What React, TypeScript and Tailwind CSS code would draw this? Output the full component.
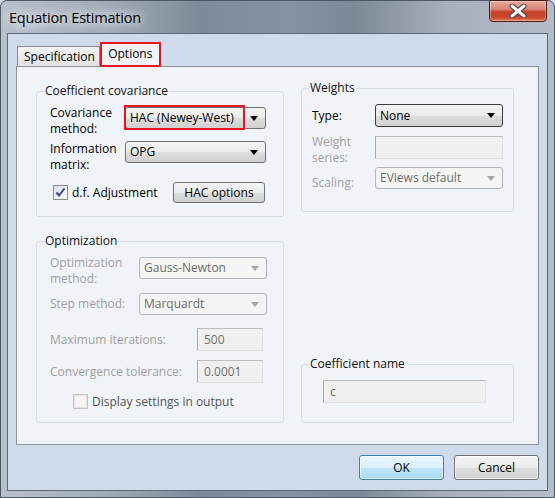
import React from "react";

function Arrow({ muted = false }: { muted?: boolean }) {
  return (
    <svg width="8" height="5" viewBox="0 0 8 5" className="shrink-0">
      <path d="M0 0H8L4 5Z" fill={muted ? "#a6a6a6" : "#000"} />
    </svg>
  );
}

function Combo({
  value,
  size,
  disabled = false,
  dark = false,
}: {
  value: string;
  size: string;
  disabled?: boolean;
  dark?: boolean;
}) {
  const look = disabled
    ? "border-[#b3b7ba] bg-[#f4f4f4] text-[#6d6d6d]"
    : dark
    ? "border-[#3c3c3c] bg-[linear-gradient(#f4f4f4_0%,#ececec_50%,#dedede_52%,#d0d0d0_100%)] text-black"
    : "border-[#707070] bg-[linear-gradient(#f4f4f4_0%,#ececec_50%,#dedede_52%,#d0d0d0_100%)] text-black";
  return (
    <div
      className={`flex items-center justify-between rounded-[3px] border pl-[4px] pr-[7px] ${look} ${size}`}
    >
      <span className="leading-[16px]">{value}</span>
      <Arrow muted={disabled} />
    </div>
  );
}

function TextBox({ value, size }: { value: string; size: string }) {
  return (
    <div
      className={`flex items-center border border-[#e2e2e2] border-l-[#a9a9a9] border-t-[#bdbdbd] bg-[#f0f0f0] pl-[6px] text-[#6d6d6d] ${size}`}
    >
      {value}
    </div>
  );
}

// group box: padding lives on the inner div so the legend stays near the corner
function Group({
  title,
  className,
  children,
}: {
  title: string;
  className: string;
  children: React.ReactNode;
}) {
  return (
    <fieldset className="rounded-[3px] border border-[#d5dde5]">
      <legend className="ml-[7px] px-[1px] leading-[16px] text-[#111]">{title}</legend>
      <div className={className}>{children}</div>
    </fieldset>
  );
}

export default function App() {
  return (
    <div className="h-[498px] w-[555px] overflow-hidden bg-[#d9dee5] font-['Open_Sans',sans-serif] text-[12px]">
      <div className="flex h-[498px] w-[555px] flex-col rounded-t-[7px] border border-[#4d5867] bg-[linear-gradient(90deg,#b7c0cb_0%,#a3adb9_18%,#7f8a98_36%,#8893a1_52%,#7d8896_64%,#a6afba_80%,#b4bcc6_100%)]">
        {/* title bar */}
        <div className="flex h-[32px] shrink-0 items-start justify-between">
          <div className="pl-[8px] pt-[7px] text-[14.5px] leading-[20px] tracking-[-0.2px] text-black [text-shadow:0_0_10px_#fff,0_0_14px_#fff]">
            Equation Estimation
          </div>
          <div className="mr-[7px] mt-[-1px] flex h-[22px] w-[58px] items-center justify-center rounded-b-[4px] border border-[#4a1c15] bg-[linear-gradient(#e9a99c_0%,#d98676_40%,#c4402a_55%,#c9462c_80%,#df7a54_100%)] shadow-[inset_0_0_0_1px_rgba(255,255,255,0.35)]">
            <svg width="18" height="14" viewBox="0 0 18 14">
              <path d="M3 2L15 12M15 2L3 12" stroke="#3b3b3b" strokeWidth="5" strokeLinecap="round" />
              <path d="M3 2L15 12M15 2L3 12" stroke="#fff" strokeWidth="3" strokeLinecap="round" />
            </svg>
          </div>
        </div>

        {/* client area */}
        <div className="mx-[6px] flex flex-col border border-[#5c6878] bg-[#cfdbeb] px-[8px] pt-[8px] pb-[10px]">
          {/* tabs */}
          <div className="flex h-[25px] items-end pl-[1px]">
            <div className="flex h-[21px] items-center border border-b-0 border-[#898c95] bg-[linear-gradient(#f3f3f3,#e2e2e2)] pl-[6px] pr-[4px] leading-[16px]">
              Specification
            </div>
            <div className="relative z-10 flex h-[25px] w-[61px] items-center justify-center border-2 border-[#e8141f] bg-[#f0f4f9] pb-[1px] leading-[16px]">
              Options
            </div>
          </div>

          {/* panel */}
          <div className="mt-[-1px] flex h-[379px] gap-[17px] border border-[#8e9198] bg-[#f0f4f9] pl-[19px] pt-[13px]">
            {/* left column */}
            <div className="mt-[3px] flex w-[248px] flex-col gap-[16px]">
              <Group title="Coefficient covariance" className="pl-[13px] pr-[16px] pb-[13px] pt-[6px]">
                <div className="flex">
                  <div className="w-[75px] leading-[16px]">
                    Covariance
                    <br />
                    method:
                  </div>
                  <div className="relative mt-[2px]">
                    <Combo value="HAC (Newey-West)" size="h-[22px] w-[141px]" />
                    <div className="absolute left-[-1px] top-[-2px] h-[25px] w-[121px] border-2 border-[#e8141f]" />
                  </div>
                </div>
                <div className="mt-[4px] flex">
                  <div className="w-[75px] leading-[16px]">
                    Information
                    <br />
                    matrix:
                  </div>
                  <Combo value="OPG" size="h-[22px] w-[141px]" />
                </div>
                <div className="mt-[9px] flex h-[21px] items-center">
                  <div className="ml-[3px] flex h-[15px] w-[15px] items-center justify-center border border-[#8e8f8f] bg-[linear-gradient(135deg,#d6dde6,#ffffff)]">
                    <svg width="11" height="11" viewBox="0 0 11 11">
                      <path d="M1.5 5.5L4 8.5L9.5 1.5" stroke="#33478a" strokeWidth="2" fill="none" />
                    </svg>
                  </div>
                  <span className="ml-[4px] leading-[16px]">d.f. Adjustment</span>
                  <div className="ml-auto mr-[2px] flex h-[21px] w-[92px] items-center justify-center rounded-[3px] border border-[#707070] bg-[linear-gradient(#f4f4f4_0%,#ececec_50%,#dedede_52%,#d0d0d0_100%)] leading-[16px]">
                    HAC options
                  </div>
                </div>
              </Group>

              <Group title="Optimization" className="pl-[13px] pr-[15px] pb-[12px] pt-[6px] text-[#a0a0a0]">
                <div className="flex">
                  <div className="w-[89px] leading-[16px]">
                    Optimization
                    <br />
                    method:
                  </div>
                  <div className="mt-[2px]">
                    <Combo value="Gauss-Newton" size="h-[22px] w-[128px]" disabled />
                  </div>
                </div>
                <div className="mt-[6px] flex">
                  <div className="w-[89px] leading-[22px]">Step method:</div>
                  <Combo value="Marquardt" size="h-[22px] w-[128px]" disabled />
                </div>
                <div className="mt-[13px] flex">
                  <div className="w-[147px] leading-[23px]">Maximum iterations:</div>
                  <TextBox value="500" size="h-[23px] w-[66px]" />
                </div>
                <div className="mt-[9px] flex">
                  <div className="w-[147px] leading-[23px]">Convergence tolerance:</div>
                  <TextBox value="0.0001" size="h-[23px] w-[66px]" />
                </div>
                <div className="mt-[10px] flex h-[17px] items-center">
                  <div className="ml-[23px] h-[15px] w-[15px] border border-[#c4c4c4] bg-[#f4f4f4] shadow-[inset_0_0_0_1px_#e6e6e6]" />
                  <span className="ml-[4px] leading-[16px] text-[#555]">Display settings in output</span>
                </div>
              </Group>
            </div>

            {/* right column */}
            <div className="flex h-[343px] w-[213px] flex-col justify-between">
              <Group title="Weights" className="pl-[10px] pr-[9px] pb-[20px] pt-[8px]">
                <div className="flex">
                  <div className="w-[63px] leading-[23px]">Type:</div>
                  <Combo value="None" size="h-[23px] w-[128px]" dark />
                </div>
                <div className="mt-[7px] flex text-[#a0a0a0]">
                  <div className="w-[63px] leading-[16px]">
                    Weight
                    <br />
                    series:
                  </div>
                  <div className="mt-[2px]">
                    <TextBox value="" size="h-[23px] w-[128px]" />
                  </div>
                </div>
                <div className="mt-[1px] flex text-[#a0a0a0]">
                  <div className="w-[63px] pt-[8px] leading-[16px]">Scaling:</div>
                  <Combo value="EViews default" size="h-[22px] w-[128px]" disabled />
                </div>
              </Group>

              <Group title="Coefficient name" className="pl-[21px] pb-[19px] pt-[8px]">
                <TextBox value="c" size="h-[23px] w-[163px]" />
              </Group>
            </div>
          </div>

          {/* buttons */}
          <div className="mt-[10px] flex justify-end gap-[10px]">
            <div className="flex h-[25px] w-[85px] items-center justify-center rounded-[3px] border border-[#3c7fb1] bg-[linear-gradient(#eaf6fd_0%,#d9f0fc_50%,#bee6fd_52%,#a7d9f5_100%)] shadow-[inset_0_0_0_1px_rgba(255,255,255,0.6)]">
              OK
            </div>
            <div className="flex h-[25px] w-[85px] items-center justify-center rounded-[3px] border border-[#707070] bg-[linear-gradient(#f4f4f4_0%,#ececec_50%,#dedede_52%,#d0d0d0_100%)] shadow-[inset_0_0_0_1px_rgba(255,255,255,0.6)]">
              Cancel
            </div>
          </div>
        </div>
      </div>
    </div>
  );
}
